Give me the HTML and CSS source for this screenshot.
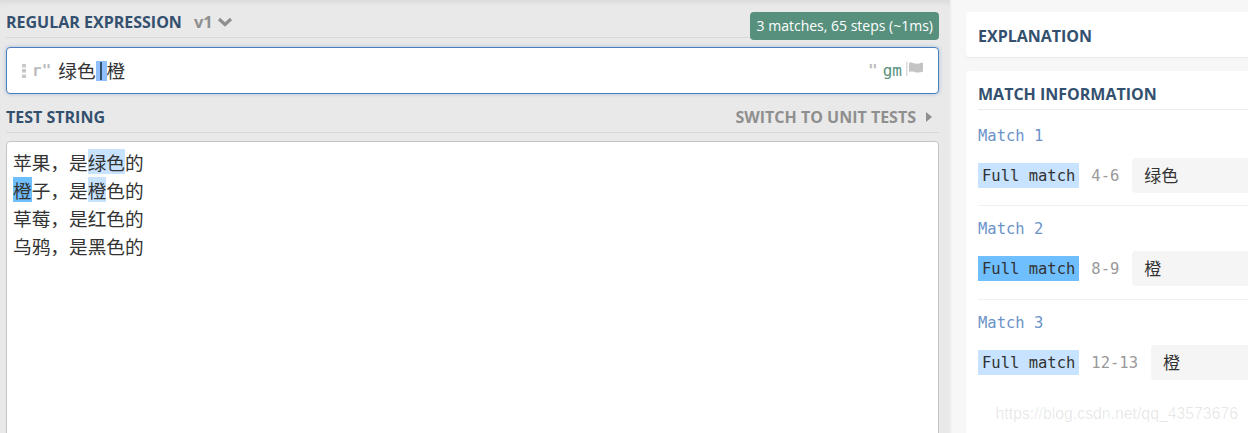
FILE: index.html
```html
<!DOCTYPE html>
<html lang="en">
<head>
    <meta charset="UTF-8">
    <title>regex tester</title>
    <link rel="stylesheet" href="styles.css">
</head>
<body>
    <div class="editor">
        <div class="section-head regex-head">
            <span class="section-title">REGULAR EXPRESSION</span>
            <span class="version">v1</span>
            <svg class="chevron" width="16" height="10" viewBox="0 0 16 10"><path d="M2 2l6 5.500L14 2" fill="none" stroke="#8f8f8f" stroke-width="3.200"/></svg>
            <span class="match-badge">3 matches, 65 steps (~1ms)</span>
        </div>
        <div class="regex-box">
            <svg class="grip" width="4" height="14" viewBox="0 0 4 14"><path d="M0 0h4v3.500H0zM0 5h4v3.500H0zM0 10.500h4V14H0z" fill="#c8c8c8"/></svg>
            <span class="delim">r"</span>
            <span class="regex-text">绿色<span class="alt"><i class="alt-bar"></i></span>橙</span>
            <span class="delim delim-end">"</span>
            <span class="flags">gm</span>
            <svg class="flag" width="17" height="14" viewBox="0 0 17 14"><path d="M0 0h1.500v14H0z" fill="#dcdcdc"/><path d="M3 1c3-1.500 5 .8 7.500.8 2 0 3.500-.5 5-1.300l1.500.5v8.500c-2 1-4 1.300-6.500 1-2.500-.4-4.500-1.500-7.500-.5z" fill="#c4c4c4"/></svg>
        </div>
        <div class="section-head test-head">
            <span class="section-title">TEST STRING</span>
            <span class="switch-link">SWITCH TO UNIT TESTS</span>
            <svg class="caret" width="6" height="10" viewBox="0 0 6 10"><path d="M0 0l6 5-6 5z" fill="#8f8f8f"/></svg>
        </div>
        <div class="test-box">
            <div class="test-line">苹果，是<span class="hl-light">绿色</span>的</div>
            <div class="test-line"><span class="hl-strong">橙</span>子，是<span class="hl-light">橙</span>色的</div>
            <div class="test-line">草莓，是红色的</div>
            <div class="test-line">乌鸦，是黑色的</div>
        </div>
    </div>
    <div class="sidebar">
        <div class="card explain-card">
            <div class="card-title">EXPLANATION</div>
        </div>
        <div class="card match-card">
            <div class="card-title card-title-ruled">MATCH INFORMATION</div>
            <div class="match first">
                <div class="match-name">Match 1</div>
                <div class="match-row">
                    <span class="full-match">Full match</span>
                    <span class="range">4-6</span>
                    <span class="match-value">绿色</span>
                </div>
            </div>
            <div class="match">
                <div class="match-name">Match 2</div>
                <div class="match-row">
                    <span class="full-match strong">Full match</span>
                    <span class="range">8-9</span>
                    <span class="match-value">橙</span>
                </div>
            </div>
            <div class="match last">
                <div class="match-name">Match 3</div>
                <div class="match-row">
                    <span class="full-match">Full match</span>
                    <span class="range">12-13</span>
                    <span class="match-value">橙</span>
                </div>
            </div>
        </div>
        <div class="watermark">https://blog.csdn.net/qq_43573676</div>
    </div>
</body>
</html>
```

FILE: styles.css
```css
body {
    margin: 0;
    display: flex;
    height: 433px;
    overflow: hidden;
    background-color: #e9e9e9;
    font-family: "Open Sans", sans-serif;
    color: #333;
}

.editor {
    width: 950px;
    flex-shrink: 0;
    box-sizing: border-box;
    padding: 0 11px 0 6px;
    overflow: hidden;
    box-shadow: inset 0 6px 6px -4px rgba(0, 0, 0, 0.08);
}

.section-head {
    display: flex;
    align-items: center;
    border-bottom: 1px solid #d9d9d9;
}

.regex-head {
    position: relative;
    height: 31px;
    padding-top: 6px;
}

.section-title {
    font-size: 16px;
    font-weight: 700;
    color: #34506f;
}

.version {
    margin-left: 12px;
    font-size: 16.500px;
    font-weight: 700;
    color: #8f8f8f;
}

.chevron {
    margin-left: 4px;
}

.match-badge {
    position: absolute;
    right: 0;
    top: 12px;
    height: 28px;
    line-height: 28px;
    padding: 0 6px 0 7px;
    border-radius: 4px;
    background-color: #57917d;
    color: #fff;
    font-size: 14px;
}

.regex-box {
    display: flex;
    align-items: center;
    height: 45px;
    margin-top: 9px;
    padding: 0 15px;
    background-color: #fff;
    border: 1px solid #4a7fc0;
    border-radius: 4px;
    box-shadow: 0 0 4px rgba(74, 127, 192, 0.4);
}

.delim {
    margin-left: 6px;
    font-family: "DejaVu Sans Mono", monospace;
    font-size: 16px;
    font-weight: 700;
    color: #bdbdbd;
}

.regex-text {
    margin: 0 0 2px 7px;
    font-family: "Noto Sans CJK SC", sans-serif;
    font-size: 18.670px;
    line-height: 20px;
    color: #333;
    display: flex;
    align-items: center;
}

.alt {
    display: flex;
    justify-content: center;
    width: 11px;
    height: 20px;
    margin-top: 2px;
    background-color: #8fbfff;
}

.alt-bar {
    display: block;
    width: 2px;
    height: 18px;
    margin-top: 1px;
    background-color: #34506f;
}

.delim-end {
    margin-left: auto;
}

.flags {
    margin-left: 5px;
    font-family: "DejaVu Sans Mono", monospace;
    font-size: 16px;
    color: #57917d;
}

.flag {
    margin-left: 4px;
    margin-top: -3px;
}

.test-head {
    height: 30px;
    padding-top: 8px;
}

.switch-link {
    margin-left: auto;
    font-size: 16px;
    font-weight: 700;
    color: #8f8f8f;
}

.caret {
    margin: 0 7px 0 10px;
}

.test-box {
    height: 320px;
    margin-top: 8px;
    padding: 6px 6px;
    background-color: #fff;
    border: 1px solid #c4c4c4;
    border-radius: 4px;
    font-family: "Noto Sans CJK SC", sans-serif;
    font-size: 18.670px;
}

.test-line {
    height: 28px;
    line-height: 28px;
}

.hl-light {
    display: inline-block;
    height: 25px;
    line-height: 25px;
    background-color: #c7e3ff;
}

.hl-strong {
    display: inline-block;
    height: 25px;
    line-height: 25px;
    background-color: #6fbfff;
}

.sidebar {
    position: relative;
    flex-grow: 1;
    box-sizing: border-box;
    padding: 12px 0 0 14px;
    border-left: 2px solid #f2f2f2;
    background-color: #f7f7f7;
    overflow: hidden;
}

.card {
    background-color: #fff;
    border-radius: 4px 0 0 4px;
    box-shadow: 0 1px 2px rgba(0, 0, 0, 0.06);
    padding-left: 12px;
}

.explain-card {
    height: 45px;
}

.match-card {
    margin-top: 14px;
    height: 400px;
}

.card-title {
    font-size: 16px;
    font-weight: 700;
    color: #34506f;
    line-height: 48px;
}

.card-title-ruled {
    line-height: 25px;
    padding-top: 11px;
    padding-bottom: 2px;
    border-bottom: 1px solid #ececec;
}

.match {
    padding: 13px 0;
    border-bottom: 1px solid #f0f0f0;
    font-family: "DejaVu Sans Mono", monospace;
    font-size: 15.500px;
}

.match.first {
    padding: 16px 0 12px;
}

.match.last {
    border-bottom: none;
}

.match-name {
    line-height: 20px;
    color: #6b93c9;
}

.match-row {
    display: flex;
    align-items: center;
    margin-top: 12px;
}

.full-match {
    padding: 1px 4px 0;
    line-height: 24px;
    background-color: #c7e3ff;
    color: #333;
}

.full-match.strong {
    background-color: #6fbfff;
}

.range {
    margin-left: 12px;
    color: #999;
}

.match-value {
    flex-grow: 1;
    margin-left: 13px;
    height: 35px;
    line-height: 33px;
    padding-left: 12px;
    border-radius: 4px 0 0 4px;
    background-color: #f5f5f5;
    font-family: "Noto Sans CJK SC", sans-serif;
    font-size: 17px;
}

.watermark {
    position: absolute;
    right: 10px;
    top: 405px;
    font-family: "Liberation Sans", sans-serif;
    font-size: 15.800px;
    color: rgba(0, 0, 0, 0.1);
}
```
